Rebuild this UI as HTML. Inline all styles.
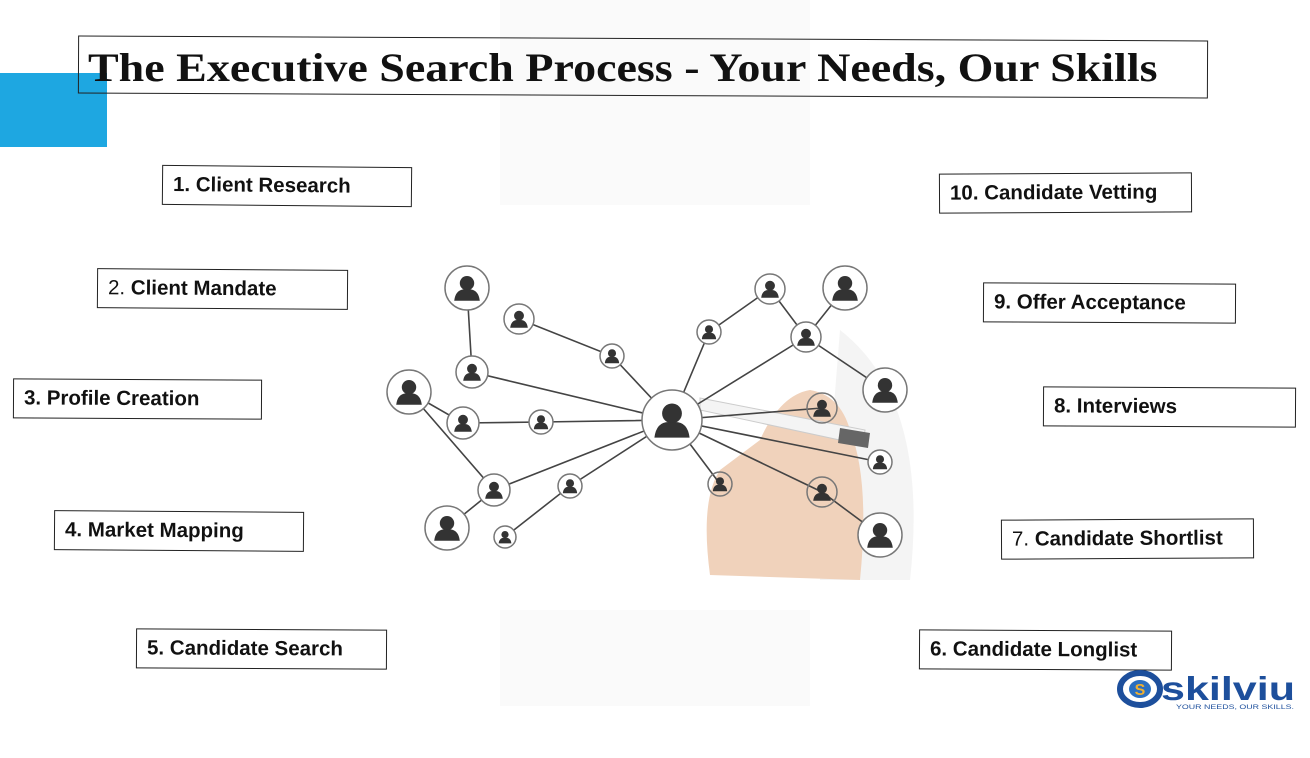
<!DOCTYPE html>
<html><head><meta charset="utf-8"><style>
body{margin:0;width:1310px;height:758px;background:#fff;position:relative;overflow:hidden;font-family:"Liberation Sans",sans-serif}
.bg{position:absolute;background:#fafafa}
.t{position:absolute;left:78px;top:38px;width:1130px;height:58px;border:1.5px solid #222;box-sizing:border-box;transform:rotate(0.25deg);background:transparent}
.tt{position:absolute;left:88px;top:44px;font-family:"Liberation Serif",serif;font-weight:bold;font-size:40px;color:#111;white-space:nowrap;transform:scaleX(1.15);transform-origin:0 0}
.b{position:absolute;border:1.5px solid #222;box-sizing:border-box;font-weight:bold;font-size:20.5px;color:#111;padding-left:10px;line-height:38px;white-space:nowrap;background:#fff}
.b span{font-weight:normal}
</style></head><body>
<div class="bg" style="left:500px;top:0;width:310px;height:205px"></div>
<div class="bg" style="left:500px;top:610px;width:310px;height:96px"></div>
<div style="position:absolute;left:0;top:73px;width:107px;height:74px;background:#1ea7e1"></div>
<div class="t"></div>
<div class="tt">The Executive Search Process - Your Needs, Our Skills</div>

<div class="b" style="left:162px;top:166px;width:250px;height:40px;transform:rotate(.5deg)">1. Client Research</div>
<div class="b" style="left:97px;top:269px;width:251px;height:40px;transform:rotate(.4deg)"><span>2.</span> Client Mandate</div>
<div class="b" style="left:13px;top:379px;width:249px;height:40px;transform:rotate(.3deg)">3. Profile Creation</div>
<div class="b" style="left:54px;top:511px;width:250px;height:40px;transform:rotate(.4deg)">4. Market Mapping</div>
<div class="b" style="left:136px;top:629px;width:251px;height:40px;transform:rotate(.3deg)">5. Candidate Search</div>
<div class="b" style="left:939px;top:173px;width:253px;height:40px;transform:rotate(-.3deg)">10. Candidate Vetting</div>
<div class="b" style="left:983px;top:283px;width:253px;height:40px;transform:rotate(.3deg)">9. Offer Acceptance</div>
<div class="b" style="left:1043px;top:387px;width:253px;height:40px;transform:rotate(.3deg)">8. Interviews</div>
<div class="b" style="left:1001px;top:519px;width:253px;height:40px;transform:rotate(-.3deg)"><span>7.</span> Candidate Shortlist</div>
<div class="b" style="left:919px;top:630px;width:253px;height:40px;transform:rotate(.3deg)">6. Candidate Longlist</div>

<svg style="position:absolute;left:0;top:0" width="1310" height="758">
<defs>
<g id="p"><circle cx="0" cy="-3" r="4.5" fill="#333"/><path d="M-8 8 Q-7 0 0 1 Q7 0 8 8 Z" fill="#333"/></g>
</defs>
<path d="M840 330 Q930 400 910 580 L820 580 Z" fill="#f0f0f0" opacity=".7"/>
<path d="M710 575 Q700 500 720 470 L760 440 Q780 395 810 390 Q840 395 850 430 Q870 480 860 580 Z" fill="#f0d2bb"/>
<path d="M700 398 L865 430 L863 445 L700 410 Z" fill="#f4f4f4" stroke="#ccc"/>
<path d="M840 428 L870 433 L868 448 L838 443 Z" fill="#666"/>
<g stroke="#444" stroke-width="1.6" fill="none">
<path d="M467 288L472 372L672 420M519 319L612 356L672 420M409 392L463 423L541 422L672 420M409 392L494 490L672 420M447 528L494 490M505 537L570 486L672 420M672 420L709 332L770 289L806 337L845 288M806 337L672 420M806 337L885 390M672 420L822 408M672 420L880 462M672 420L720 484M672 420L822 492L880 535"/>
</g>
<g fill="#fff" stroke="#777" stroke-width="1.5">
<circle cx="672" cy="420" r="30"/><circle cx="467" cy="288" r="22"/><circle cx="519" cy="319" r="15"/><circle cx="612" cy="356" r="12"/><circle cx="472" cy="372" r="16"/><circle cx="409" cy="392" r="22"/><circle cx="463" cy="423" r="16"/><circle cx="541" cy="422" r="12"/><circle cx="494" cy="490" r="16"/><circle cx="447" cy="528" r="22"/><circle cx="570" cy="486" r="12"/><circle cx="505" cy="537" r="11"/><circle cx="709" cy="332" r="12"/><circle cx="770" cy="289" r="15"/><circle cx="845" cy="288" r="22"/><circle cx="806" cy="337" r="15"/><circle cx="885" cy="390" r="22"/><circle cx="822" cy="408" r="15" fill="none"/><circle cx="880" cy="462" r="12"/><circle cx="720" cy="484" r="12" fill="none"/><circle cx="822" cy="492" r="15" fill="none"/><circle cx="880" cy="535" r="22"/>
</g>
<use href="#p" transform="translate(672,420) scale(2.2)"/>
<use href="#p" transform="translate(467,288) scale(1.6)"/><use href="#p" transform="translate(519,319) scale(1.1)"/><use href="#p" transform="translate(612,356) scale(.9)"/><use href="#p" transform="translate(472,372) scale(1.1)"/><use href="#p" transform="translate(409,392) scale(1.6)"/><use href="#p" transform="translate(463,423) scale(1.1)"/><use href="#p" transform="translate(541,422) scale(.9)"/><use href="#p" transform="translate(494,490) scale(1.1)"/><use href="#p" transform="translate(447,528) scale(1.6)"/><use href="#p" transform="translate(570,486) scale(.9)"/><use href="#p" transform="translate(505,537) scale(.8)"/><use href="#p" transform="translate(709,332) scale(.9)"/><use href="#p" transform="translate(770,289) scale(1.1)"/><use href="#p" transform="translate(845,288) scale(1.6)"/><use href="#p" transform="translate(806,337) scale(1.1)"/><use href="#p" transform="translate(885,390) scale(1.6)"/><use href="#p" transform="translate(822,408) scale(1.1)"/><use href="#p" transform="translate(880,462) scale(.9)"/><use href="#p" transform="translate(720,484) scale(.9)"/><use href="#p" transform="translate(822,492) scale(1.1)"/><use href="#p" transform="translate(880,535) scale(1.6)"/>
<ellipse cx="1140" cy="689" rx="20" ry="16" fill="none" stroke="#1d4f9c" stroke-width="6"/>
<ellipse cx="1140" cy="689" rx="11" ry="9" fill="#2a6fc0"/>
<text x="1140" y="695" font-family="Liberation Sans" font-weight="bold" font-size="16" fill="#f0b030" text-anchor="middle">S</text>
<text x="1161" y="700" font-family="Liberation Sans" font-weight="bold" font-size="33" fill="#1d4f9c" textLength="134" lengthAdjust="spacingAndGlyphs">skilviu</text>
<text x="1176" y="709" font-family="Liberation Sans" font-size="6" fill="#1d4f9c" textLength="118" lengthAdjust="spacingAndGlyphs">YOUR NEEDS, OUR SKILLS.</text>
</svg>
</body></html>
